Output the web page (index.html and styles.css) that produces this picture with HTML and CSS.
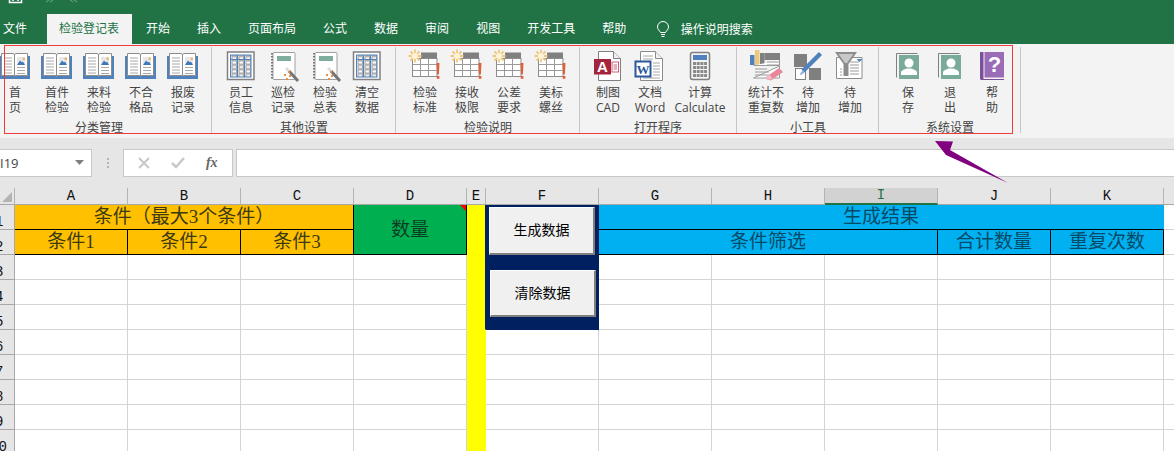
FILE: index.html
```html
<!DOCTYPE html>
<html lang="zh-CN">
<head>
  <meta charset="UTF-8">
  <title>检验登记表</title>
  <link rel="stylesheet" href="styles.css">
</head>
<body>
<svg class="defs" width="0" height="0">
  <defs>
    <pattern id="cells" width="7" height="4.4" patternUnits="userSpaceOnUse" x="11" y="8">
      <rect x="1" y="0.7" width="4.6" height="3" fill="#fff" stroke="#9a9a9a"/>
    </pattern>
    <symbol id="i-book" viewBox="0 0 42 35">
      <rect x="5" y="8" width="31" height="23" fill="#4f81bd"/>
      <path d="M7.5 5.5h12l1 1.5 1-1.5h12V27.500h-12l-1 1-1-1h-12z" fill="#fff" stroke="#8c8c8c"/>
      <path d="M20.500 7v21" stroke="#8c8c8c"/>
      <path d="M10 10h8M10 13h8M10 16h8M10 19h8M10 22h8M10 25h8M23 19.500h8M23 22.500h8M23 25.500h8" stroke="#a8a8a8"/>
      <rect x="23" y="9" width="8" height="8" fill="#e8e8e8"/>
      <path d="M23 17l3-4.500 2 2 1-1 2 3.500z" fill="#3f78b8"/>
      <rect x="28.500" y="9.500" width="2.500" height="2.500" fill="#e8b878"/>
    </symbol>
    <symbol id="i-grid" viewBox="0 0 42 35">
      <rect x="7.500" y="4" width="26.500" height="27.500" fill="#fff" stroke="#808080" stroke-width="1.500"/>
      <rect x="10.500" y="7" width="20.500" height="22" fill="url(#cells)" stroke="#4f81bd"/>
      <path d="M17.500 7v22M24.500 7v22" stroke="#4f81bd"/>
      <path d="M10.500 11.500h20.500" stroke="#4f81bd"/>
    </symbol>
    <symbol id="i-note" viewBox="0 0 42 35">
      <rect x="11" y="4.500" width="22" height="27" rx="1" fill="#fff" stroke="#a0a0a0"/>
      <path d="M10 5v27" stroke="#777" stroke-width="2" stroke-dasharray="1.500 1.500"/>
      <rect x="15" y="8" width="14" height="5" fill="#7fae9e"/>
      <path d="M27 23l9 10" stroke="#747474" stroke-width="3"/>
      <path d="M24 20l3 3" stroke="#ddd" stroke-width="3"/>
      <path d="M26 24h2M22 27h2M27 28h2M24 31h2" stroke="#ee8c3e" stroke-width="2"/>
    </symbol>
    <symbol id="i-alert" viewBox="0 0 42 35">
      <rect x="17" y="4.500" width="16" height="5.500" fill="#808080"/>
      <rect x="8.500" y="10.500" width="24.500" height="18" fill="#fff" stroke="#8c8c8c"/>
      <path d="M8.500 16.500h24.500M8.500 22.500h24.500M16.500 10.500v18M24.500 10.500v18" stroke="#9a9a9a"/>
      <path d="M11 1.500v13M4.500 8h13M6.500 3.500l9 9M15.500 3.500l-9 9" stroke="#f1c879" stroke-width="1.800"/>
      <circle cx="11" cy="8" r="3" fill="#fdf3dc"/>
      <path d="M32.500 15h3l-.6 11.500h-1.800z" fill="#e0603a"/>
      <rect x="32.800" y="28" width="2.600" height="2.800" fill="#e0603a"/>
    </symbol>
    <symbol id="i-access" viewBox="0 0 42 35">
      <path d="M11.500 3.500h15l7 7v22h-22z" fill="#fff" stroke="#808080"/>
      <path d="M26.500 3.500v7h7" fill="#f0f0f0" stroke="#808080"/>
      <rect x="25" y="14" width="6.500" height="10" fill="#fff" stroke="#c9627a"/>
      <path d="M26.500 17h3.500M26.500 19h3.500M26.500 21h3.500" stroke="#c9627a"/>
      <rect x="7" y="11" width="17" height="15.500" fill="#a4243b"/>
      <text x="15.500" y="23.500" class="glyph-a">A</text>
    </symbol>
    <symbol id="i-word" viewBox="0 0 42 35">
      <path d="M11.500 3.500h15l7 7v22h-22z" fill="#fff" stroke="#8c8c8c"/>
      <path d="M26.500 3.500v7h7" fill="#f0f0f0" stroke="#8c8c8c"/>
      <path d="M14 8h10M14 11h10M24 15h7M24 18h7M24 21h7M24 24h7M24 27h7M14 30h17" stroke="#a8a8a8"/>
      <rect x="6.500" y="13.500" width="15" height="15" fill="#fff" stroke="#2b579a" stroke-width="2"/>
      <text x="14" y="25.500" class="glyph-w">W</text>
    </symbol>
    <symbol id="i-calc" viewBox="0 0 42 35">
      <rect x="11.500" y="4.500" width="19" height="27" rx="2" fill="#f3f3f3" stroke="#808080" stroke-width="1.500"/>
      <rect x="14" y="7" width="14" height="5" fill="#4f81bd"/>
      <path d="M14 15.500h14M14 19.500h14M14 23.500h14M14 27.500h14" stroke="#8a8a8a" stroke-width="3" stroke-dasharray="3 .7"/>
    </symbol>
    <symbol id="i-stat" viewBox="0 0 42 35">
      <rect x="5" y="7" width="4.500" height="10" fill="#4f81bd"/>
      <rect x="10" y="2" width="4.500" height="15" fill="#edc87a"/>
      <rect x="15" y="5" width="4.500" height="12" fill="#808080"/>
      <rect x="19.500" y="5" width="15.500" height="7" fill="#808080"/>
      <path d="M8.500 17.500h26V12M34.500 18v12h-26z" fill="#fff" stroke="#9a9a9a"/>
      <path d="M10 21h12M10 24h14M10 27h14M22 14h12M22 17h12" stroke="#9a9a9a"/>
      <path d="M22 31.500l-1-2.500 13-9 4 4-12 8.500z" fill="#e8879c"/>
      <path d="M22 31.500l-1-2.500 3.500-2.500 3 4-1.500 1z" fill="#f4bcc7"/>
    </symbol>
    <symbol id="i-pen" viewBox="0 0 42 35">
      <rect x="7" y="6" width="13" height="13" fill="#7f7f7f"/>
      <rect x="22" y="20" width="12" height="12" fill="#7f7f7f"/>
      <rect x="8.500" y="20.500" width="10" height="11" fill="#fff" stroke="#7f7f7f"/>
      <path d="M33.500 5.500L16 23" stroke="#4f81bd" stroke-width="4.500"/>
      <path d="M16 23l-2.500 3.500 3.500-2.500" stroke="#8ab0dc" stroke-width="1.500" fill="none"/>
    </symbol>
    <symbol id="i-funnel" viewBox="0 0 42 35">
      <path d="M7.500 9.500h25.500v21h-25.500z" fill="#fff" stroke="#8c8c8c"/>
      <path d="M6 4h22l-8.500 12v12h-5V16z" fill="#8c8c8c"/>
      <path d="M9.500 6h15l-6.500 9h-2z" fill="#c8c8c8"/>
      <path d="M11 21h2M11 24h2M11 27h2M21 14h9M21 17h9M21 20h9M21 23h9M21 26h9" stroke="#9a9a9a"/>
      <path d="M27.500 11h6l-3 3z" fill="#4f81bd"/>
    </symbol>
    <symbol id="i-person" viewBox="0 0 42 35">
      <path d="M9.500 29.500V5.500h21" fill="none" stroke="#808080"/>
      <rect x="12" y="7" width="20" height="24" fill="#7aaa9a"/>
      <circle cx="22" cy="15" r="4.500" fill="#fff"/>
      <path d="M14 27v-2.500c0-2.500 4-3 5.500-4h5c1.500 1 5.500 1.500 5.500 4V27z" fill="#fff"/>
    </symbol>
    <symbol id="i-help" viewBox="0 0 42 35">
      <rect x="9" y="4" width="3.500" height="27" fill="#7a4f9c"/>
      <rect x="13.500" y="4" width="19.500" height="25.500" fill="#9a6cb8"/>
      <path d="M9.500 31.500h23.500" stroke="#7a4f9c"/>
      <text x="23.500" y="24" class="glyph-q">?</text>
    </symbol>
  </defs>
</svg>

<div class="app">
  <div class="titlebar">
    <svg class="qat" width="90" height="14" viewBox="0 0 90 14">
      <path d="M9.500 0v2.500h12V0M13 0v1M18 0v1" fill="none" stroke="#fff" stroke-width="1.500"/>
      <path d="M46 2l3-2M50 2l3-2M70 0l3 2M74 0l3 2" stroke="#5f9a7b" stroke-width="1.200" fill="none"/>
    </svg>
  </div>

  <nav class="tabs">
    <a class="tab tab-file">文件</a>
    <a class="tab tab-active">检验登记表</a>
    <a class="tab">开始</a>
    <a class="tab">插入</a>
    <a class="tab">页面布局</a>
    <a class="tab">公式</a>
    <a class="tab">数据</a>
    <a class="tab">审阅</a>
    <a class="tab">视图</a>
    <a class="tab">开发工具</a>
    <a class="tab">帮助</a>
    <svg class="bulb" width="14" height="17" viewBox="0 0 14 17">
      <path d="M4.500 11.500C3.500 9.500 1.500 8.500 1.500 6a5.500 5.500 0 0 1 11 0c0 2.500-2 3.500-3 5.500zM5 13.500h4M5.500 15.500h3" fill="none" stroke="#fff"/>
    </svg>
    <span class="tab-search">操作说明搜索</span>
  </nav>

  <div class="ribbon">
    <section class="group group-first">
      <div class="items">
        <div class="item"><svg class="icon"><use href="#i-book"/></svg><span>首<br>页</span></div>
        <div class="item"><svg class="icon"><use href="#i-book"/></svg><span>首件<br>检验</span></div>
        <div class="item"><svg class="icon"><use href="#i-book"/></svg><span>来料<br>检验</span></div>
        <div class="item"><svg class="icon"><use href="#i-book"/></svg><span>不合<br>格品</span></div>
        <div class="item"><svg class="icon"><use href="#i-book"/></svg><span>报废<br>记录</span></div>
      </div>
      <div class="group-name">分类管理</div>
    </section>
    <section class="group">
      <div class="items">
        <div class="item"><svg class="icon"><use href="#i-grid"/></svg><span>员工<br>信息</span></div>
        <div class="item"><svg class="icon"><use href="#i-note"/></svg><span>巡检<br>记录</span></div>
        <div class="item"><svg class="icon"><use href="#i-note"/></svg><span>检验<br>总表</span></div>
        <div class="item"><svg class="icon"><use href="#i-grid"/></svg><span>清空<br>数据</span></div>
      </div>
      <div class="group-name">其他设置</div>
    </section>
    <section class="group">
      <div class="items">
        <div class="item"><svg class="icon"><use href="#i-alert"/></svg><span>检验<br>标准</span></div>
        <div class="item"><svg class="icon"><use href="#i-alert"/></svg><span>接收<br>极限</span></div>
        <div class="item"><svg class="icon"><use href="#i-alert"/></svg><span>公差<br>要求</span></div>
        <div class="item"><svg class="icon"><use href="#i-alert"/></svg><span>美标<br>螺丝</span></div>
      </div>
      <div class="group-name">检验说明</div>
    </section>
    <section class="group group-apps">
      <div class="items">
        <div class="item"><svg class="icon"><use href="#i-access"/></svg><span>制图<br>CAD</span></div>
        <div class="item"><svg class="icon"><use href="#i-word"/></svg><span>文档<br>Word</span></div>
        <div class="item item-wide"><svg class="icon"><use href="#i-calc"/></svg><span>计算<br>Calculate</span></div>
      </div>
      <div class="group-name">打开程序</div>
    </section>
    <section class="group">
      <div class="items">
        <div class="item"><svg class="icon"><use href="#i-stat"/></svg><span>统计不<br>重复数</span></div>
        <div class="item"><svg class="icon"><use href="#i-pen"/></svg><span>待<br>增加</span></div>
        <div class="item"><svg class="icon"><use href="#i-funnel"/></svg><span>待<br>增加</span></div>
      </div>
      <div class="group-name">小工具</div>
    </section>
    <section class="group">
      <div class="items">
        <div class="item"><svg class="icon"><use href="#i-person"/></svg><span>保<br>存</span></div>
        <div class="item"><svg class="icon"><use href="#i-person"/></svg><span>退<br>出</span></div>
        <div class="item"><svg class="icon"><use href="#i-help"/></svg><span>帮<br>助</span></div>
      </div>
      <div class="group-name">系统设置</div>
    </section>
  </div>

  <div class="formula">
    <div class="namebox">
      <span class="namebox-text">I19</span>
      <svg width="10" height="6" viewBox="0 0 10 6"><path d="M0 0h9L4.500 5z" fill="#808080"/></svg>
    </div>
    <div class="formula-dots"></div>
    <div class="fx-box">
      <svg width="12" height="12" viewBox="0 0 12 12"><path d="M1 1l10 10M11 1L1 11" stroke="#c8c8c8" stroke-width="2"/></svg>
      <svg width="14" height="12" viewBox="0 0 14 12"><path d="M1 6l4 4 8-9" fill="none" stroke="#c8c8c8" stroke-width="2.500"/></svg>
      <span class="fx">fx</span>
    </div>
    <div class="formula-input"></div>
  </div>

  <div class="sheet-wrap">
    <table class="sheet">
      <colgroup>
        <col class="c-row"><col class="c-std"><col class="c-std"><col class="c-std"><col class="c-std">
        <col class="c-e"><col class="c-std"><col class="c-std"><col class="c-std"><col class="c-std">
        <col class="c-std"><col class="c-std"><col class="c-end">
      </colgroup>
      <thead>
        <tr>
          <th class="corner"><div class="corner-mark"></div></th>
          <th>A</th><th>B</th><th>C</th><th>D</th><th>E</th><th>F</th><th>G</th><th>H</th>
          <th class="col-on">I</th><th>J</th><th>K</th><th class="col-end"></th>
        </tr>
      </thead>
      <tbody>
        <tr>
          <th class="rownum">1</th>
          <td colspan="3" class="amber">条件（最大3个条件）</td>
          <td rowspan="2" class="green"><span>数量</span></td>
          <td rowspan="5" class="yellow yellow-top"></td>
          <td rowspan="5" class="navy">
            <div class="btn-stack">
              <button type="button" class="sheet-btn">生成数据</button>
              <button type="button" class="sheet-btn sheet-btn-low">清除数据</button>
            </div>
          </td>
          <td colspan="5" class="blue blue-head">生成结果</td>
          <td class="end"></td>
        </tr>
        <tr>
          <th class="rownum">2</th>
          <td class="amber">条件1</td><td class="amber">条件2</td><td class="amber">条件3</td>
          <td colspan="3" class="blue">条件筛选</td>
          <td class="blue">合计数量</td>
          <td class="blue">重复次数</td>
          <td class="end"></td>
        </tr>
        <tr><th class="rownum">3</th><td></td><td></td><td></td><td></td><td></td><td></td><td></td><td></td><td></td><td class="end"></td></tr>
        <tr><th class="rownum">4</th><td></td><td></td><td></td><td></td><td></td><td></td><td></td><td></td><td></td><td class="end"></td></tr>
        <tr><th class="rownum">5</th><td></td><td></td><td></td><td></td><td></td><td></td><td></td><td></td><td></td><td class="end"></td></tr>
        <tr><th class="rownum">6</th><td></td><td></td><td></td><td></td><td class="yellow"></td><td></td><td></td><td></td><td></td><td></td><td></td><td class="end"></td></tr>
        <tr><th class="rownum">7</th><td></td><td></td><td></td><td></td><td class="yellow"></td><td></td><td></td><td></td><td></td><td></td><td></td><td class="end"></td></tr>
        <tr><th class="rownum">8</th><td></td><td></td><td></td><td></td><td class="yellow"></td><td></td><td></td><td></td><td></td><td></td><td></td><td class="end"></td></tr>
        <tr><th class="rownum">9</th><td></td><td></td><td></td><td></td><td class="yellow"></td><td></td><td></td><td></td><td></td><td></td><td></td><td class="end"></td></tr>
        <tr><th class="rownum rownum-wide">10</th><td></td><td></td><td></td><td></td><td class="yellow"></td><td></td><td></td><td></td><td></td><td></td><td></td><td class="end"></td></tr>
      </tbody>
    </table>
  </div>

  <!-- annotations drawn over the window -->
  <div class="red-frame"></div>
  <svg class="arrow" width="80" height="50" viewBox="930 138 80 50">
    <path d="M935 141l18 .5-3 8.500 58 33-62-28z" fill="#800080"/>
  </svg>
</div>
</body>
</html>
```

FILE: styles.css
```css
html, body {
  margin: 0;
  height: 451px;
  overflow: hidden;
  background: #e6e6e6;
}

body {
  font-family: "Open Sans", "Noto Sans CJK SC", sans-serif;
  font-size: 12px;
}

.defs {
  display: block;
  height: 0;
}

.app {
  position: relative;
  width: 1174px;
  height: 451px;
  overflow: hidden;
}

/* title bar + tabs */
.titlebar {
  height: 14px;
  background: #217346;
}

.qat {
  display: block;
}

.tabs {
  display: flex;
  align-items: center;
  height: 30px;
  background: #217346;
  color: #fff;
}

.tab {
  padding: 0 13.5px;
  line-height: 30px;
}

.tab-file {
  padding: 0 20px 0 3px;
}

.tab-active {
  padding: 0 13px 0 12px;
  margin-right: .5px;
  background: #f3f3f3;
  color: #217346;
}

.bulb {
  margin-left: 16px;
}

.tab-search {
  margin-left: 11px;
}

/* ribbon */
.ribbon {
  display: flex;
  height: 94px;
  margin-left: -6px;
  padding-top: 3px;
  box-sizing: border-box;
  background: #f3f3f3;
  color: #444;
}

.group {
  height: 86px;
  padding: 1px 7px 0 8px;
  box-sizing: border-box;
  border-right: 1px solid #c6c6c6;
}

.group-first {
  padding-left: 0;
}

.group-apps {
  padding-left: 7px;
}

.items {
  display: flex;
}

.item {
  width: 42px;
  display: flex;
  flex-direction: column;
  align-items: center;
  text-align: center;
  line-height: 15px;
}

.item-wide {
  width: 58px;
}

.icon {
  display: block;
  width: 42px;
  height: 35px;
  margin-bottom: 2px;
}

.group-name {
  margin-top: 5px;
  line-height: 16px;
  text-align: center;
}

.glyph-a, .glyph-q {
  font-family: "Liberation Sans", sans-serif;
  font-weight: bold;
  fill: #fff;
  text-anchor: middle;
}

.glyph-a {
  font-size: 15px;
}

.glyph-q {
  font-size: 22px;
}

.glyph-w {
  font-family: "Liberation Serif", serif;
  font-weight: bold;
  font-size: 13px;
  fill: #2b579a;
  text-anchor: middle;
}

/* formula bar */
.formula {
  display: flex;
  height: 28px;
  margin-top: 11px;
}

.namebox {
  display: flex;
  align-items: center;
  justify-content: space-between;
  width: 93px;
  margin-left: -1px;
  padding: 0 6px 0 0;
  box-sizing: border-box;
  background: #fff;
  border: 1px solid #c8c8c8;
  color: #444;
  font-size: 13px;
}

.formula-dots {
  width: 2px;
  height: 10px;
  margin: 9px 14px 0 15px;
  background: repeating-linear-gradient(#b4b4b4 0 2px, transparent 2px 4px);
}

.fx-box {
  display: flex;
  align-items: center;
  justify-content: space-around;
  width: 110px;
  padding: 0 4px;
  box-sizing: border-box;
  background: #fff;
  border: 1px solid #c8c8c8;
}

.fx {
  font-family: "Liberation Serif", serif;
  font-style: italic;
  font-weight: bold;
  font-size: 14px;
  color: #666;
}

.formula-input {
  flex: 1;
  margin-left: 3px;
  margin-right: -2px;
  background: #fff;
  border: 1px solid #c8c8c8;
}

/* sheet */
.sheet-wrap {
  padding-top: 11px;
}

.sheet {
  table-layout: fixed;
  width: 1174px;
  border-collapse: separate;
  border-spacing: 0;
}

.c-row { width: 15px; }
.c-std { width: 113px; }
.c-e { width: 19px; }
.c-end { width: 10px; }

.sheet thead th {
  height: 17px;
  padding: 0;
  box-sizing: border-box;
  background: #e6e6e6;
  border-right: 1px solid #b4b4b4;
  border-bottom: 1px solid #a8a8a8;
  font: normal 14px/16px "Liberation Mono", monospace;
  color: #111;
  overflow: hidden;
}

.sheet thead .col-end {
  border-right: 0;
}

.sheet thead .col-on {
  background: #d2d2d2;
  border-bottom: 2px solid #217346;
  line-height: 15px;
  color: #217346;
}

.corner {
  vertical-align: bottom;
}

.corner-mark {
  width: 0;
  height: 0;
  margin: 0 0 2px 2px;
  border-style: solid;
  border-width: 0 0 10px 10px;
  border-color: transparent transparent #b4b4b4 transparent;
}

.sheet .rownum {
  height: 25px;
  padding: 0;
  box-sizing: border-box;
  background: #e6e6e6;
  border-right: 1px solid #a8a8a8;
  border-bottom: 1px solid #a8a8a8;
  vertical-align: bottom;
  text-align: left;
  text-indent: -5px;
  font: normal 14px/13px "Liberation Mono", monospace;
  color: #111;
  overflow: hidden;
}

.sheet .rownum-wide {
  text-indent: -10px;
}

.sheet td {
  height: 25px;
  padding: 0;
  box-sizing: border-box;
  background: #fff;
  border-right: 1px solid #d4d4d4;
  border-bottom: 1px solid #d4d4d4;
  text-align: center;
  font: 19px/22px "Liberation Serif", "Noto Sans CJK SC", serif;
}

.sheet td.end {
  border-right: 0;
}

.sheet td.amber {
  background: #ffc000;
  border-color: #000;
  color: #3c3a10;
}

.sheet td.green {
  position: relative;
  background: #00b050;
  border-color: #000;
  color: #0b3d22;
}

.sheet td.green::after {
  content: "";
  position: absolute;
  top: 0;
  right: 0;
  border-style: solid;
  border-width: 0 6px 6px 0;
  border-color: transparent #f00 transparent transparent;
}

.sheet td.yellow {
  background: #ff0;
  border-color: #ff0;
}

.sheet td.yellow-top {
  border-bottom-color: #ff0;
  border-right-color: #002060;
}

.sheet td.navy {
  background: #002060;
  border-color: #002060;
  vertical-align: top;
}

.sheet td.blue {
  background: #00b0f0;
  border-color: #000;
  color: #054a66;
}

.sheet td.blue-head {
  border-right-color: #00b0f0;
}

.btn-stack {
  display: flex;
  flex-direction: column;
  align-items: flex-start;
  padding-top: 2px;
}

.sheet-btn {
  width: 106px;
  height: 48px;
  margin-left: 3px;
  padding: 0 0 3px;
  background: #f0f0f0;
  border: 0;
  border-top: 1px solid #fff;
  border-left: 1px solid #fff;
  border-right: 2px solid #808080;
  border-bottom: 2px solid #808080;
  font: 14px "Noto Sans CJK SC", sans-serif;
  color: #000;
}

.sheet-btn-low {
  height: 47px;
  margin: 15px 0 0 4px;
}

/* red box and arrow lie over the ribbon */
.red-frame {
  position: absolute;
  left: 4px;
  top: 45px;
  width: 1009px;
  height: 89px;
  box-sizing: border-box;
  border: 1px solid #ee3b3b;
}

.arrow {
  position: absolute;
  left: 930px;
  top: 138px;
}
```
